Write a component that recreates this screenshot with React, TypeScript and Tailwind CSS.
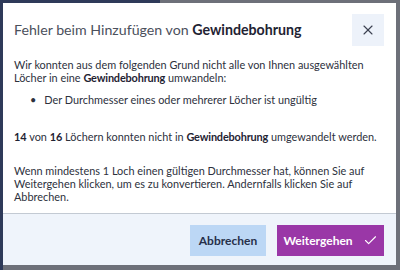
import { X, Check } from 'lucide-react';

export default function App() {
  return (
    <div className="w-[400px] h-[270px] flex bg-[#6d7079] overflow-hidden" style={{ fontFamily: 'Lato, "Noto Sans", sans-serif' }}>
      {/* backdrop strip left */}
      <div className="w-[3px] h-full bg-[#2e3a59] shrink-0" />
      <div className="flex flex-col w-[393px]">
        <div className="h-[3px] flex shrink-0">
          <div className="w-[157px] bg-[#2e3a59]" />
          <div className="flex-1 bg-[#6d7079]" />
        </div>

        {/* Dialog */}
        <div className="w-[393px] h-[262px] bg-white flex flex-col">
          {/* Header */}
          <div className="flex items-center justify-between pl-[11px] pr-[12px] pt-[11px]">
            <h2 className="text-[14.2px] text-[#4b505c] leading-[20px]">
              Fehler beim Hinzufügen von <span className="font-bold text-[#1f2333]">Gewindebohrung</span>
            </h2>
            <button className="w-[32px] h-[32px] flex items-center justify-center bg-[#edf2fa] text-[#3a3f4f]">
              <X size={16} strokeWidth={1.6} />
            </button>
          </div>

          {/* Body */}
          <div className="flex-1 pl-[11px] pr-[3px] pt-[11.5px] text-[10.9px] leading-[13px] text-[#2d313d]">
            <p>
              Wir konnten aus dem folgenden Grund nicht alle von Ihnen ausgewählten Löcher in eine{' '}
              <span className="font-bold tracking-[-0.15px] text-[#1f2333]">Gewindebohrung</span> umwandeln:
            </p>
            <ul className="mt-[9px] pl-[16px]">
              <li className="flex gap-[8px]">
                <span>•</span>
                <span>Der Durchmesser eines oder mehrerer Löcher ist ungültig</span>
              </li>
            </ul>
            <p className="mt-[24px]">
              <span className="font-bold text-[#1f2333]">14</span> von{' '}
              <span className="font-bold text-[#1f2333]">16</span> Löchern konnten nicht in{' '}
              <span className="font-bold tracking-[-0.15px] text-[#1f2333]">Gewindebohrung</span> umgewandelt werden.
            </p>
            <p className="mt-[21px] pr-[10px]">
              Wenn mindestens 1 Loch einen gültigen Durchmesser hat, können Sie auf Weitergehen klicken, um es zu konvertieren. Andernfalls klicken Sie auf Abbrechen.
            </p>
          </div>

          {/* Footer */}
          <div className="h-[52px] border-t border-[#c3cad3] bg-[#eff4fb] flex items-start justify-end gap-[11px] pt-[11px] pr-[12px]">
            <button className="w-[76px] h-[31px] bg-[#bcd7f5] text-[#27304a] text-[12px] font-bold flex items-center justify-center">
              Abbrechen
            </button>
            <button className="w-[107px] h-[31px] bg-[#9a37a7] text-white text-[12px] font-bold flex items-center justify-center gap-[10px]">
              Weitergehen
              <Check size={15} strokeWidth={1.8} />
            </button>
          </div>
        </div>
      </div>
    </div>
  );
}
